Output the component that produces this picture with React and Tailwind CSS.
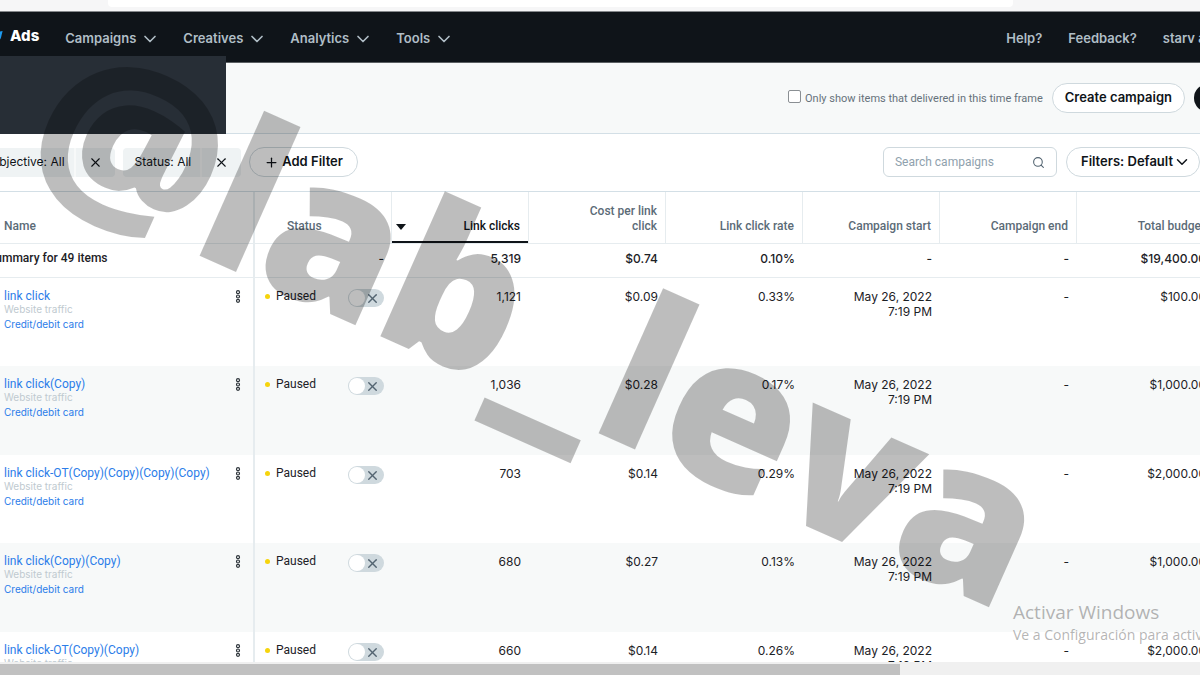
import React from 'react';
import { ChevronDown, Plus, Search, X } from 'lucide-react';

const menus = ['Campaigns', 'Creatives', 'Analytics', 'Tools'];

const columns = [
  'Cost per link click',
  'Link click rate',
  'Campaign start',
  'Campaign end',
  'Total budget',
];

const rows = [
  { name: 'link click', clicks: '1,121', cost: '$0.09', rate: '0.33%', budget: '$100.00' },
  { name: 'link click(Copy)', clicks: '1,036', cost: '$0.28', rate: '0.17%', budget: '$1,000.00' },
  { name: 'link click-OT(Copy)(Copy)(Copy)(Copy)', clicks: '703', cost: '$0.14', rate: '0.29%', budget: '$2,000.00' },
  { name: 'link click(Copy)(Copy)', clicks: '680', cost: '$0.27', rate: '0.13%', budget: '$1,000.00' },
  { name: 'link click-OT(Copy)(Copy)', clicks: '660', cost: '$0.14', rate: '0.26%', budget: '$2,000.00' },
];

function BrowserEdge() {
  return (
    <div className="flex h-3 shrink-0 border-b border-[#85888b] bg-[#f6f6f7]">
      <div className="mr-[187px] ml-[108px] h-[7px] flex-1 rounded-b bg-white" />
    </div>
  );
}

function TopNav() {
  return (
    <header className="flex h-[51px] shrink-0 items-center overflow-hidden border-b border-[#5b6063] bg-[#0f1419] pt-[3px] text-[13px] font-semibold whitespace-nowrap text-[#b0bec6]">
      <svg className="h-4 w-[10px] shrink-0" viewBox="0 0 10 16" aria-hidden="true">
        <path d="M0 0.5 L2.6 0 L1.6 4 C1.2 6 0.8 7.5 0 8.5 Z" fill="#1d9bf0" />
      </svg>
      <a href="#ads" className="-mt-1 mr-[26px] text-[15px] font-extrabold text-white">Ads</a>
      <nav className="flex items-center gap-[23px]">
        {menus.map((m) => (
          <button key={m} type="button" className="flex items-center gap-1">
            {m}
            <ChevronDown size={20} strokeWidth={2} />
          </button>
        ))}
      </nav>
      <div className="-mr-[21px] ml-auto flex shrink-0 gap-[26px]">
        <a href="#help">Help?</a>
        <a href="#feedback">Feedback?</a>
        <a href="#account">starv ads</a>
      </div>
    </header>
  );
}

function SubHeader() {
  return (
    <section className="flex h-[71px] shrink-0 justify-between border-b border-[#d3dfe6] bg-[#f7f9f9]">
      <div className="relative z-10 -mt-[7px] h-[78px] w-[226px] bg-[#272e36]" />
      <div className="-mr-[94px] flex items-center">
        <input id="delivered" type="checkbox" className="mr-1 -mt-[3px] size-[13px] appearance-none rounded-xs border border-[#8a8f93] bg-white" />
        <label htmlFor="delivered" className="mr-[9px] pt-[2px] font-['Roboto',sans-serif] text-[11px] text-[#66727b]">
          Only show items that delivered in this time frame
        </label>
        <button type="button" className="mr-[9px] h-[30px] rounded-full border border-[#cfd9de] bg-white px-3 text-[13px] font-semibold text-[#0f1419]">
          Create campaign
        </button>
        <button type="button" aria-label="Export" className="h-7 w-[100px] rounded-full bg-[#0f1419]" />
      </div>
    </section>
  );
}

function FilterChip({ label }) {
  return (
    <div className="flex h-[29px] overflow-hidden rounded bg-[#eff3f4] text-[12px] text-[#0f1419]">
      <button type="button" className="border-r-2 border-[#f7f9f9] pr-[9px] pl-3">{label}</button>
      <button type="button" aria-label={'Remove ' + label} className="flex w-[39px] items-center justify-center">
        <X size={15} strokeWidth={1.75} />
      </button>
    </div>
  );
}

function FilterBar() {
  return (
    <section className="flex h-[58px] shrink-0 items-center border-b border-[#d3dfe6] bg-white pb-px">
      <div className="-ml-[22px] flex items-center gap-2">
        <FilterChip label="Objective: All" />
        <FilterChip label="Status: All" />
        <button type="button" className="flex h-[30px] items-center gap-[3px] rounded-full border border-[#cfd9de] px-[14px] text-[13px] font-semibold text-[#0f1419]">
          <Plus size={15} strokeWidth={2} />
          Add Filter
        </button>
      </div>
      <div className="ml-auto flex items-center gap-[9px]">
        <div className="flex h-[30px] w-[174px] items-center rounded-md border border-[#cfd9de] px-[11px]">
          <input type="text" aria-label="Search campaigns" placeholder="Search campaigns" className="min-w-0 flex-1 font-['Roboto',sans-serif] text-[12px] outline-none placeholder:text-[#8fa1ad]" />
          <Search size={13} strokeWidth={2} className="text-[#536471]" />
        </div>
        <button type="button" className="flex h-[30px] items-center rounded-full border border-[#cfd9de] pr-2 pl-[14px] text-[13px] font-semibold text-[#0f1419]">
          Filters: Default
          <ChevronDown size={18} strokeWidth={2} />
        </button>
      </div>
    </section>
  );
}

function MoreIcon() {
  return (
    <svg width="6" height="13" viewBox="0 0 6 13" fill="none" stroke="#2b3238" strokeWidth="1.2" aria-hidden="true">
      <circle cx="3" cy="2.2" r="1.5" />
      <circle cx="3" cy="6.5" r="1.5" />
      <circle cx="3" cy="10.8" r="1.5" />
    </svg>
  );
}

function PausedSwitch({ name }) {
  return (
    <button type="button" role="switch" aria-checked="false" aria-label={'Run ' + name} className="flex h-[18px] w-9 items-center justify-between rounded-full bg-[#cfd9de] pr-1 pl-px">
      <span className="size-4 rounded-full bg-white" />
      <X size={15} strokeWidth={2.25} className="text-[#536471]" />
    </button>
  );
}

function CampaignTable() {
  return (
    <div className="min-h-0 flex-1 overflow-hidden">
      <table className="w-[1214px] table-fixed border-separate border-spacing-0 text-right text-[12px] leading-[15px] text-[#1c2126]">
        <colgroup>
          <col className="w-[255px]" />
          <col className="w-[137px]" />
          <col className="w-[137px]" />
          <col className="w-[137px]" />
          <col className="w-[137px]" />
          <col className="w-[137px]" />
          <col className="w-[137px]" />
          <col className="w-[137px]" />
        </colgroup>
        <thead className="font-['Roboto',sans-serif]">
          <tr className="h-[52px] align-bottom text-[#5b6b77] [&>th]:border-b [&>th]:border-[#e6ecef] [&>th]:pb-[9px] [&>th]:font-medium">
            <th className="border-r-2 pl-1 text-left">Name</th>
            <th className="border-r pl-8 text-left">Status</th>
            <th aria-sort="descending" className="border-r p-0! text-[#0f1419]">
              <div className="flex h-[51px] items-end justify-between border-b-2 border-[#0f1419] pr-2 pb-[7px] pl-1">
                <svg width="10" height="6" viewBox="0 0 10 6" className="mb-1" aria-hidden="true">
                  <path d="M0 0 H10 L5 6 Z" fill="#0f1419" />
                </svg>
                <span>Link clicks</span>
              </div>
            </th>
            {columns.map((c) => (
              <th key={c} className="border-r pr-2 pl-9">{c}</th>
            ))}
          </tr>
        </thead>
        <tbody>
          <tr className="h-[34px] font-medium [&>td]:border-b [&>td]:border-[#e6ecef] [&>td]:pr-2 [&>td]:pb-1">
            <td className="border-r-2 text-left font-['Roboto',sans-serif]">
              <span className="-ml-3">Summary for 49 items</span>
            </td>
            <td>-</td>
            <td>5,319</td>
            <td>$0.74</td>
            <td>0.10%</td>
            <td>-</td>
            <td>-</td>
            <td>$19,400.00</td>
          </tr>
          {rows.map((r) => (
            <tr key={r.name} className="h-[89px] align-top odd:bg-[#f7f9f9] even:h-[88px] [&>td]:pt-[11px] [&>td]:pr-2">
              <td className="border-r-2 border-[#e6ecef] pl-1 text-left">
                <div className="flex items-start justify-between">
                  <div className="whitespace-nowrap">
                    <a href="#campaign" className="block font-['Roboto',sans-serif] text-[#2b7de9]">{r.name}</a>
                    <div className="-mt-px text-[10px] leading-3 text-[#c0cad0]">Website traffic</div>
                    <a href="#funding" className="mt-[3px] block text-[10px] leading-3 text-[#2b7de9]">Credit/debit card</a>
                  </div>
                  <button type="button" aria-label={'Actions for ' + r.name} className="mt-px mr-1">
                    <MoreIcon />
                  </button>
                </div>
              </td>
              <td>
                <div className="flex items-start justify-between pl-[10px]">
                  <span className="flex items-center gap-[6px] font-['Roboto',sans-serif]">
                    <span className="size-[5px] rounded-full bg-[#f6d40c]" />
                    Paused
                  </span>
                  <PausedSwitch name={r.name} />
                </div>
              </td>
              <td>{r.clicks}</td>
              <td>{r.cost}</td>
              <td>{r.rate}</td>
              <td>May 26, 2022<br />7:19 PM</td>
              <td>-</td>
              <td>{r.budget}</td>
            </tr>
          ))}
        </tbody>
      </table>
    </div>
  );
}

export default function App() {
  return (
    <div className="relative flex h-screen flex-col overflow-hidden bg-white font-['Inter',sans-serif]">
      <BrowserEdge />
      <TopNav />
      <SubHeader />
      <FilterBar />
      <CampaignTable />
      <div className="flex h-[13px] shrink-0 bg-[#f0f0f0] pt-[2px]">
        <div className="w-3/4 bg-[#c1c1c1]" />
      </div>
      <div className="pointer-events-none absolute top-[600px] left-[1013px] z-20 font-['Open_Sans',sans-serif] whitespace-nowrap text-[#6b6b6b]/50">
        <div className="text-[19px] leading-6">Activar Windows</div>
        <div className="text-[14px] leading-[22px]">Ve a Configuración para activar Windows.</div>
      </div>
      <div className="pointer-events-none absolute top-[5px] left-[91px] z-20 origin-top-left rotate-[24deg] font-['Open_Sans',sans-serif] text-[209px] leading-none font-extrabold text-black/26">
        @lab_leva
      </div>
    </div>
  );
}
